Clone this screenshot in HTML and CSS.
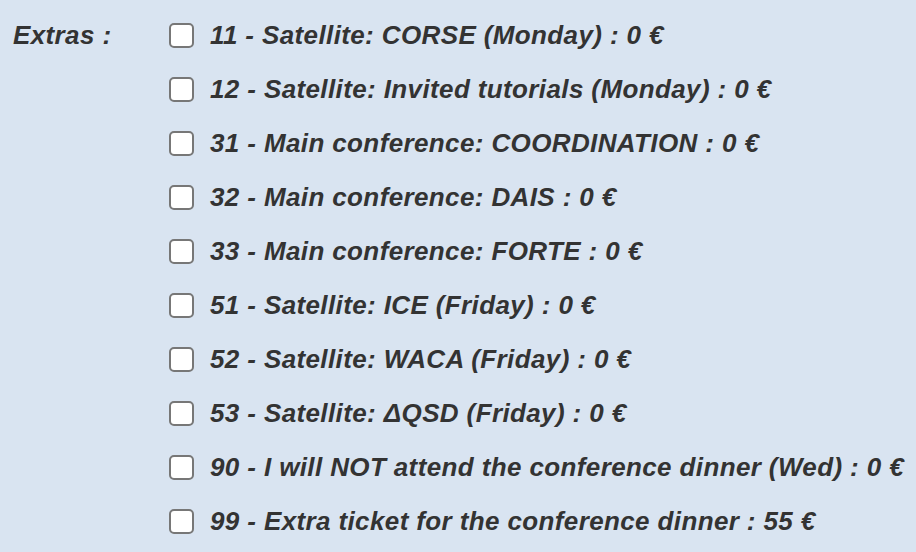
FILE: index.html
```html
<!DOCTYPE html>
<html>
<head>
<meta charset="utf-8">
<link rel="stylesheet" href="styles.css">
</head>
<body>
<div class="form-row">
  <div class="label">Extras :</div>
  <div class="options">
    <label class="opt"><span class="box"></span><span class="txt">11 - Satellite: CORSE (Monday) : 0 €</span></label>
    <label class="opt"><span class="box"></span><span class="txt">12 - Satellite: Invited tutorials (Monday) : 0 €</span></label>
    <label class="opt"><span class="box"></span><span class="txt">31 - Main conference: COORDINATION : 0 €</span></label>
    <label class="opt"><span class="box"></span><span class="txt">32 - Main conference: DAIS : 0 €</span></label>
    <label class="opt"><span class="box"></span><span class="txt">33 - Main conference: FORTE : 0 €</span></label>
    <label class="opt"><span class="box"></span><span class="txt">51 - Satellite: ICE (Friday) : 0 €</span></label>
    <label class="opt"><span class="box"></span><span class="txt">52 - Satellite: WACA (Friday) : 0 €</span></label>
    <label class="opt"><span class="box"></span><span class="txt">53 - Satellite: ΔQSD (Friday) : 0 €</span></label>
    <label class="opt"><span class="box"></span><span class="txt">90 - I will NOT attend the conference dinner (Wed) : 0 €</span></label>
    <label class="opt"><span class="box"></span><span class="txt">99 - Extra ticket for the conference dinner : 55 €</span></label>
  </div>
</div>
</body>
</html>
```

FILE: styles.css
```css
html, body {
  margin: 0;
  padding: 0;
  background: #d9e4f1;
}
body {
  font-family: "Liberation Sans", Arial, sans-serif;
  font-weight: 700;
  font-style: italic;
  font-size: 26px;
  letter-spacing: 0.38px;
  color: #333333;
  width: 916px;
  height: 552px;
  overflow: hidden;
}
.form-row {
  display: flex;
  padding: 8px 0 0 13px;
}
.label {
  width: 156px;
  height: 54px;
  line-height: 54px;
  font-weight: 700;
  flex: none;
}
.options {
  display: flex;
  flex-direction: column;
}
.opt {
  display: flex;
  align-items: center;
  height: 54px;
  gap: 16px;
  font-weight: 700;
}
.box {
  width: 21px;
  height: 21px;
  border: 2px solid #777777;
  border-radius: 5px;
  background: #ffffff;
  flex: none;
}
.txt {
  white-space: nowrap;
}
```
